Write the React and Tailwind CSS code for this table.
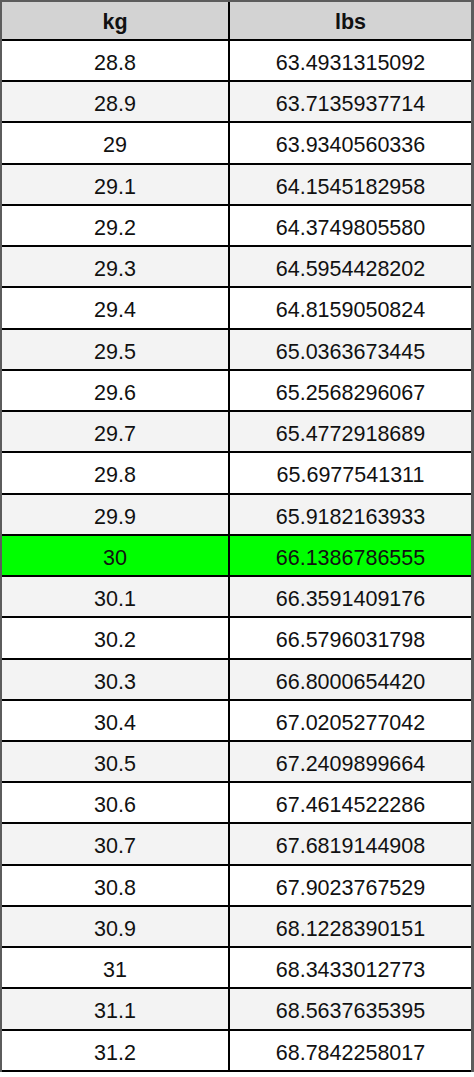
const rows = [
  ['28.8', '63.4931315092'],
  ['28.9', '63.7135937714'],
  ['29', '63.9340560336'],
  ['29.1', '64.1545182958'],
  ['29.2', '64.3749805580'],
  ['29.3', '64.5954428202'],
  ['29.4', '64.8159050824'],
  ['29.5', '65.0363673445'],
  ['29.6', '65.2568296067'],
  ['29.7', '65.4772918689'],
  ['29.8', '65.6977541311'],
  ['29.9', '65.9182163933'],
  ['30', '66.1386786555'],
  ['30.1', '66.3591409176'],
  ['30.2', '66.5796031798'],
  ['30.3', '66.8000654420'],
  ['30.4', '67.0205277042'],
  ['30.5', '67.2409899664'],
  ['30.6', '67.4614522286'],
  ['30.7', '67.6819144908'],
  ['30.8', '67.9023767529'],
  ['30.9', '68.1228390151'],
  ['31', '68.3433012773'],
  ['31.1', '68.5637635395'],
  ['31.2', '68.7842258017'],
];

const App = () => {
  return (
    <div
      className="w-[474px] h-[1077px] bg-white text-[#111] text-[21.5px]"
      style={{ fontFamily: '"Liberation Sans", Arial, sans-serif' }}
    >
      <div className="border-t-2 border-l-2 border-r-[3px] border-[#5c5c5c]">
        <div className="flex h-[39px] border-b-2 border-black bg-[#d3d3d3] font-bold">
          <div className="w-[228px] flex items-center justify-center pt-[3px] border-r-2 border-black">kg</div>
          <div className="flex-1 flex items-center justify-center pt-[3px]">lbs</div>
        </div>

        {rows.map(([kg, lbs], i) => (
          <div
            key={kg}
            className={`flex h-[41.24px] border-b-2 border-black ${
              kg === '30' ? 'bg-[#00ff00]' : i % 2 === 1 ? 'bg-[#f3f3f3]' : 'bg-white'
            }`}
          >
            <div className="w-[228px] flex items-center justify-center pt-[5px] border-r-2 border-black">{kg}</div>
            <div className="flex-1 flex items-center justify-center pt-[5px]">{lbs}</div>
          </div>
        ))}
      </div>
    </div>
  );
};

export default App;
